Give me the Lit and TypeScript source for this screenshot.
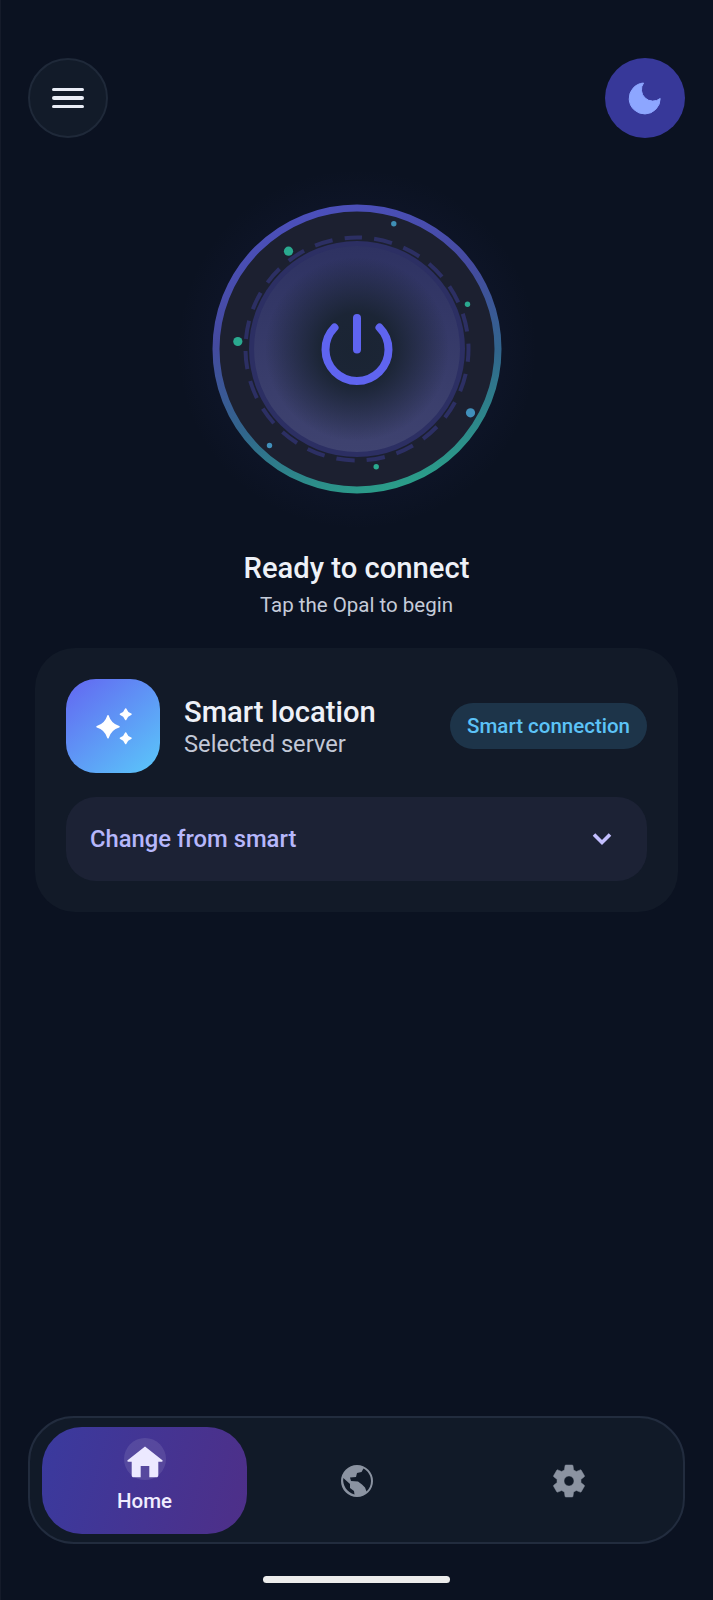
import { LitElement, html, css, svg } from "lit";
import { customElement } from "lit/decorators.js";

const particles: [number, number, number, string][] = [
  [393.3, 223.3, 2.7, "#3f8fb5"],
  [288, 250.7, 4.6, "#2aa98f"],
  [467, 303.7, 2.7, "#2aa98f"],
  [237.3, 341, 4.6, "#2aa98f"],
  [470, 412.3, 4.6, "#4190bb"],
  [269, 445, 2.7, "#4190bb"],
  [375.7, 466.3, 2.7, "#2aa98f"],
];

@customElement("app-root")
export class AppRoot extends LitElement {
  static styles = css`
    :host {
      display: block;
      font-family: Roboto, "Noto Sans", sans-serif;
      color: #eef1f8;
    }
    .page {
      box-sizing: border-box;
      width: 713px;
      height: 1600px;
      background: #0b1221;
      box-shadow: inset 1px 0 0 #151b2a;
      display: flex;
      flex-direction: column;
      overflow: hidden;
    }
    .top {
      display: flex;
      justify-content: space-between;
      padding: 58px 28px 0 28px;
    }
    .round {
      width: 80px;
      height: 80px;
      border-radius: 50%;
      box-sizing: border-box;
      display: flex;
      align-items: center;
      justify-content: center;
    }
    .menu {
      background: #121b29;
      border: 2px solid #1f2939;
      flex-direction: column;
      gap: 5px;
    }
    .menu i {
      display: block;
      width: 32px;
      height: 3.5px;
      border-radius: 2px;
      background: #e9edf6;
    }
    .moon {
      background: #373899;
    }
    .moon svg {
      width: 32px;
      height: 32px;
      overflow: visible;
      fill: #8da6ff;
      stroke: #8da6ff;
      stroke-width: 1;
      stroke-linejoin: round;
    }
    .opal {
      display: block;
      width: 360px;
      height: 360px;
      align-self: center;
      margin-top: 31px;
    }
    .status {
      text-align: center;
      margin-top: 21px;
    }
    .status h1 {
      margin: 0;
      font-size: 29.2px;
      line-height: 36px;
      font-weight: 500;
      color: #eef1f8;
    }
    .status p {
      margin: 6px 0 0;
      font-size: 20.5px;
      line-height: 26px;
      color: #c5cbd9;
    }
    .card {
      box-sizing: border-box;
      margin: 30px 0 0 35px;
      width: 643px;
      height: 264px;
      border-radius: 40px;
      background: #121a28;
      padding: 31px;
      display: flex;
      flex-direction: column;
      gap: 24px;
    }
    .row {
      display: flex;
      align-items: center;
      height: 94px;
    }
    .badge {
      width: 94px;
      height: 94px;
      border-radius: 30px;
      background: linear-gradient(140deg, #6366f1, #5ac8fa);
      display: flex;
      align-items: center;
      justify-content: center;
      flex: none;
    }
    .badge svg {
      width: 94px;
      height: 94px;
      fill: #fff;
    }
    .info {
      margin-left: 24px;
      flex: 1;
      padding-top: 3px;
    }
    .info b {
      display: block;
      font-size: 29.2px;
      line-height: 33px;
      font-weight: 500;
      color: #eef1f8;
    }
    .info span {
      display: block;
      font-size: 23.7px;
      line-height: 30px;
      color: #c2c8d6;
    }
    .chip {
      height: 46px;
      padding: 0 17px;
      border-radius: 23px;
      background: #1d3449;
      color: #5cc3f7;
      font-size: 20.5px;
      font-weight: 500;
      display: flex;
      align-items: center;
    }
    .select {
      height: 84px;
      border-radius: 30px;
      background: #1c2235;
      display: flex;
      align-items: center;
      justify-content: space-between;
      padding: 0 33px 0 24px;
      color: #b6b7fb;
      font-size: 23.8px;
      font-weight: 500;
    }
    .select svg {
      width: 24px;
      height: 16px;
      fill: none;
      stroke: #c3bfff;
      stroke-width: 3.6;
    }
    .nav {
      box-sizing: border-box;
      margin: auto 0 0 28px;
      width: 657px;
      height: 128px;
      border-radius: 46px;
      background: #111a28;
      border: 2px solid #222c3e;
      padding: 9px 12px;
      display: grid;
      grid-template-columns: 205px 1fr 1fr;
    }
    .tab {
      display: flex;
      align-items: center;
      justify-content: center;
      padding-left: 8px;
    }
    .tab svg {
      fill: #8b93a1;
    }
    .tab svg.globe {
      width: 54px;
      height: 54px;
    }
    .tab svg.cog {
      width: 40px;
      height: 40px;
      stroke: #8b93a1;
      stroke-width: 0.3;
    }
    .tab.active {
      height: 107px;
      padding-left: 0;
      border-radius: 40px;
      background: linear-gradient(105deg, #3a3a9e, #4e2f88);
      flex-direction: column;
      justify-content: flex-start;
      padding-top: 11px;
      box-sizing: border-box;
      color: #f0edff;
      font-size: 20.5px;
      font-weight: 500;
    }
    .halo {
      width: 42px;
      height: 42px;
      border-radius: 50%;
      background: rgba(255, 255, 255, 0.1);
      position: relative;
    }
    .tab.active .halo svg {
      position: absolute;
      left: 3px;
      top: 8px;
      width: 36px;
      height: 32px;
      fill: #ece9ff;
    }
    .tab.active span {
      margin-top: 9px;
      line-height: 24px;
    }
    .bar {
      width: 187px;
      height: 7px;
      border-radius: 4px;
      background: #ececec;
      margin: 32px auto 17px;
      align-self: center;
    }
  `;

  private opal() {
    return html`<svg class="opal" viewBox="176.5 168.5 360 360" aria-label="Opal power button">
      <defs>
        <linearGradient id="ring" gradientUnits="userSpaceOnUse" x1="310" y1="204" x2="400" y2="493">
          <stop offset="0" stop-color="#4c50bd"></stop>
          <stop offset="0.35" stop-color="#444a9f"></stop>
          <stop offset="0.65" stop-color="#31658c"></stop>
          <stop offset="1" stop-color="#2aa189"></stop>
        </linearGradient>
        <linearGradient id="face" x1="0" y1="0" x2="0" y2="1">
          <stop offset="0" stop-color="#2e3262"></stop>
          <stop offset="1" stop-color="#3f4370"></stop>
        </linearGradient>
        <radialGradient id="core" cx="0.5" cy="0.5" r="0.5">
          <stop offset="0" stop-color="#1a2433" stop-opacity="1"></stop>
          <stop offset="0.4" stop-color="#1a2433" stop-opacity="0.95"></stop>
          <stop offset="1" stop-color="#1a2433" stop-opacity="0"></stop>
        </radialGradient>
        <radialGradient id="glow" cx="0.5" cy="0.5" r="0.5">
          <stop offset="0.78" stop-color="#4a50b8" stop-opacity="0.04"></stop>
          <stop offset="1" stop-color="#4a50b8" stop-opacity="0"></stop>
        </radialGradient>
      </defs>
      <circle cx="356.5" cy="348.5" r="180" fill="url(#glow)"></circle>
      <circle cx="356.5" cy="348.5" r="141" fill="#1c2030" stroke="url(#ring)" stroke-width="7"></circle>
      <circle
        cx="356.5"
        cy="348.5"
        r="111.5"
        fill="none"
        stroke="#2c2f63"
        stroke-width="4"
        stroke-dasharray="18.3 12.16"
        stroke-dashoffset="13.2"
        transform="rotate(-90 356.5 348.5)"
      ></circle>
      <circle cx="356.5" cy="348.5" r="105.5" fill="url(#face)" stroke="#2c2f63" stroke-width="5"></circle>
      <circle cx="356.5" cy="348.5" r="92" fill="url(#core)"></circle>
      ${particles.map(([x, y, r, c]) => svg`<circle cx=${x} cy=${y} r=${r} fill=${c}></circle>`)}
      <path
        d="M334 327a31.5 31.5 0 1 0 45 0M356.5 317.500v31.500"
        fill="none"
        stroke="#5f64f0"
        stroke-width="8"
        stroke-linecap="round"
      ></path>
    </svg>`;
  }

  render() {
    return html`<div class="page">
      <div class="top">
        <div class="round menu"><i></i><i></i><i></i></div>
        <div class="round moon">
          <svg viewBox="0 0 32 32">
            <path d="M14.500 1A15.500 15.500 0 1 0 31.200 16.500 11.500 11.500 0 0 1 14.500 1z"></path>
          </svg>
        </div>
      </div>
      ${this.opal()}
      <div class="status">
        <h1>Ready to connect</h1>
        <p>Tap the Opal to begin</p>
      </div>
      <div class="card">
        <div class="row">
          <div class="badge">
            <svg viewBox="0 0 94 94">
              <path d="M42 36.700Q44.500 45.200 53 47.700 44.500 50.200 42 58.700 39.500 50.200 31 47.700 39.500 45.200 42 36.700z" stroke="#fff" stroke-width="1.500" stroke-linejoin="round"></path>
              <path d="M59.700 30Q61 34 65 35.300 61 36.600 59.700 40.600 58.400 36.600 54.400 35.300 58.400 34 59.700 30z" stroke="#fff" stroke-width="1.500" stroke-linejoin="round"></path>
              <path d="M59.700 54Q61 58 65 59.300 61 60.600 59.700 64.600 58.400 60.600 54.400 59.300 58.400 58 59.700 54z" stroke="#fff" stroke-width="1.500" stroke-linejoin="round"></path>
            </svg>
          </div>
          <div class="info">
            <b>Smart location</b>
            <span>Selected server</span>
          </div>
          <div class="chip">Smart connection</div>
        </div>
        <div class="select">
          <span>Change from smart</span>
          <svg viewBox="0 0 24 16"><path d="M4 3.500l8 8 8-8"></path></svg>
        </div>
      </div>
      <div class="nav">
        <div class="tab active">
          <div class="halo">
            <svg viewBox="0 0 36 32">
              <path
                d="M18 0.500 35.400 14.300c.6.500.2 1.400-.6 1.400H31.300V29.500c0 1-.8 1.800-1.800 1.800H22.300V20H13.700V31.300H6.500c-1 0-1.800-.8-1.800-1.800V15.700H1.200c-.8 0-1.200-.9-.6-1.400z"
              ></path>
            </svg>
          </div>
          <span>Home</span>
        </div>
        <div class="tab">
          <svg class="globe" viewBox="0 0 54 54">
            <path
              fill-rule="evenodd"
              d="M27 11a16 16 0 1 0 0 32 16 16 0 0 0 0-32zM33.500 14.500 31.500 18 27 19 26 23 20 23.500 21 27 28 27.500 32 30.500 35 33.500 36.500 37.500C39.500 34.500 41 31 41 27 41 21.500 38 17 33.500 14.500zM13.300 24C12.300 31 17 38.500 24.500 40.500L24 37 20 34 20 30z"
            ></path>
          </svg>
        </div>
        <div class="tab">
          <svg class="cog" viewBox="0 0 24 24">
            <path
              fill-rule="evenodd"
              d="M19.140 12.940c.04-.3.060-.61.060-.94 0-.32-.02-.64-.07-.94l2.030-1.580c.18-.14.230-.41.120-.61l-1.920-3.320c-.12-.22-.37-.29-.59-.22l-2.390.96c-.5-.38-1.030-.7-1.620-.94l-.36-2.540c-.04-.24-.24-.41-.48-.41h-3.840c-.24 0-.43.17-.47.41l-.36 2.540c-.59.24-1.130.57-1.620.94l-2.390-.96c-.22-.08-.47 0-.59.22L2.740 8.870c-.12.21-.08.47.12.61l2.030 1.580c-.05.3-.09.63-.09.94s.02.64.07.94l-2.030 1.580c-.18.14-.23.41-.12.61l1.920 3.320c.12.22.37.29.59.22l2.390-.96c.5.38 1.030.7 1.620.94l.36 2.540c.05.24.24.41.48.41h3.840c.24 0 .44-.17.47-.41l.36-2.540c.59-.24 1.130-.56 1.620-.94l2.390.96c.22.08.47 0 .59-.22l1.920-3.320c.12-.22.07-.47-.12-.61l-2.010-1.580zM12 15c-1.650 0-3-1.350-3-3s1.350-3 3-3 3 1.350 3 3-1.350 3-3 3z"
            ></path>
          </svg>
        </div>
      </div>
      <div class="bar"></div>
    </div>`;
  }
}
